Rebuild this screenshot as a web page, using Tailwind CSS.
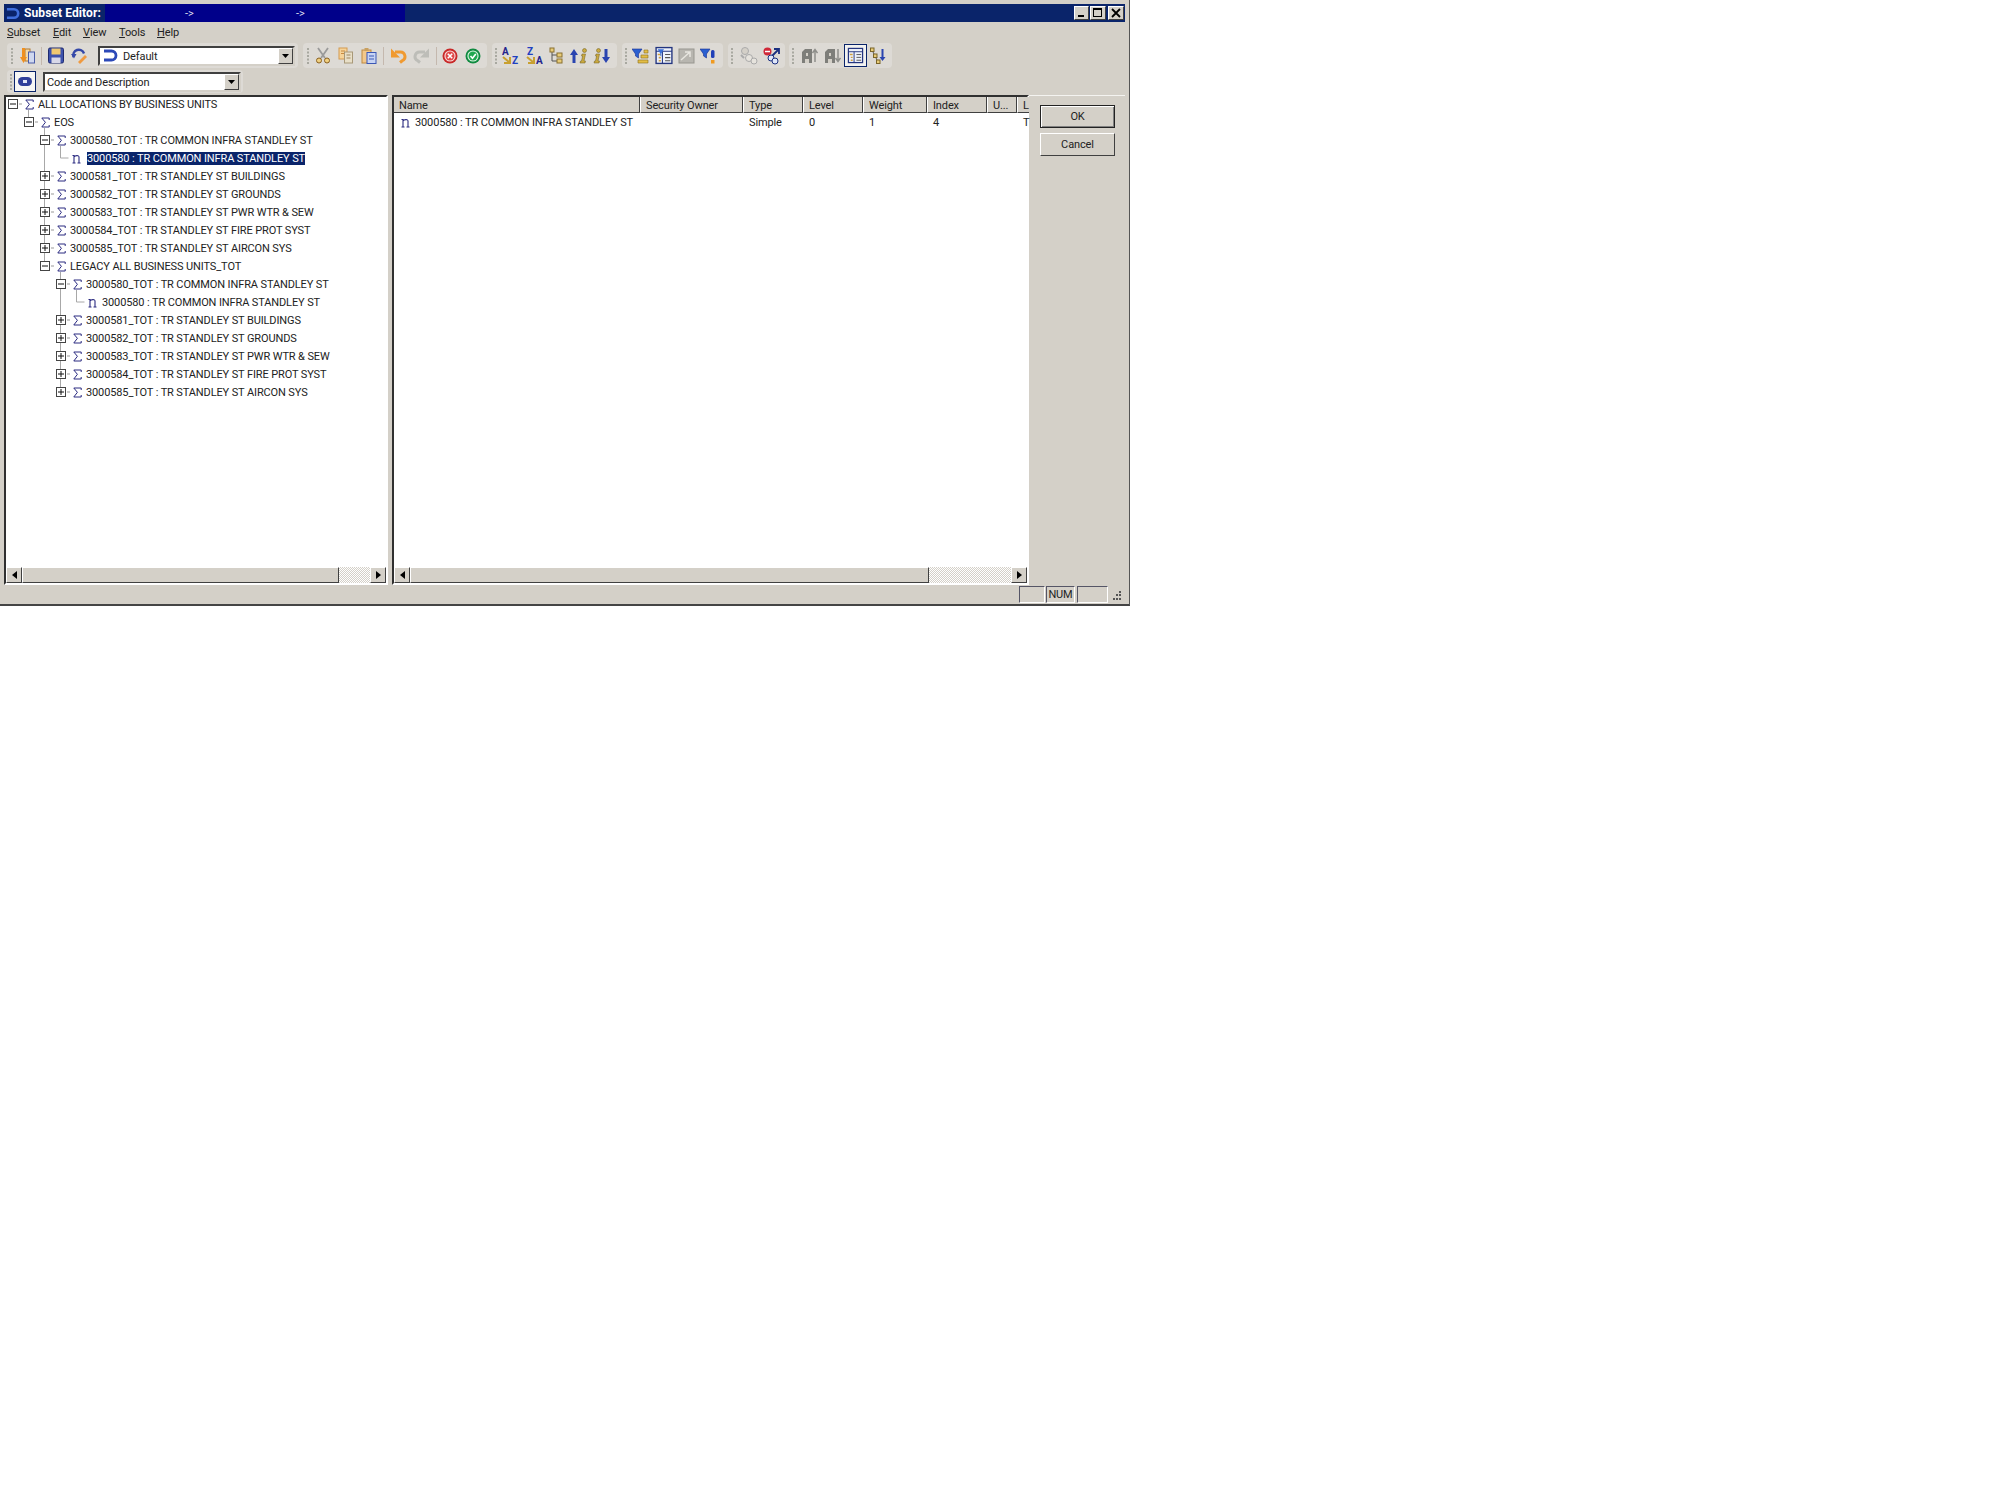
<!DOCTYPE html>
<html>
<head>
<meta charset="utf-8">
<script src="https://cdn.jsdelivr.net/npm/@tailwindcss/browser@4"></script>
</head>
<body class="bg-white font-['Roboto',sans-serif] text-[11px] tracking-[-0.12px] leading-none text-black">
<svg class="hidden">
  <defs>
    <symbol id="plus" viewBox="0 0 17 10"><rect x=".5" y=".5" width="9" height="9" fill="#fff" stroke="#444"/><path d="M2 5h6M5 2v6" stroke="#111"/><path d="M11 5h3" stroke="#999"/></symbol>
    <symbol id="minus" viewBox="0 0 17 10"><rect x=".5" y=".5" width="9" height="9" fill="#fff" stroke="#444"/><path d="M2 5h6" stroke="#111"/><path d="M11 5h3" stroke="#999"/></symbol>
    <symbol id="sigma" viewBox="0 0 9 11"><path d="M8.200 3V1H.8l3.600 4.300L.8 10h7.400V8" fill="none" stroke="#2a2a80" stroke-width="1"/></symbol>
    <symbol id="leaf" viewBox="0 0 9 11"><path d="M.5 2.500H2v7M.5 10h3M2 4C3 2.500 7 1.800 7 4v6M5.500 10h3" fill="none" stroke="#2a2a80" stroke-width="1.100"/></symbol>
    <symbol id="logo" viewBox="0 0 16 13"><path d="M1 2h7.500a4.500 4.500 0 0 1 0 9H1" fill="none" stroke="currentColor" stroke-width="2.800"/></symbol>
    <symbol id="down" viewBox="0 0 9 9"><path d="M1 3h7L4.500 7z" fill="#000"/></symbol>
    <symbol id="grip" viewBox="0 0 2 16"><path d="M1 0v16" stroke="#a8a8a0" stroke-width="2" stroke-dasharray="2 1.500"/></symbol>
    <symbol id="table" viewBox="0 0 18 18"><rect x="1.500" y="1.500" width="15" height="15" fill="#eef2fb" stroke="#24357f" stroke-width="1.300"/><path d="M1.500 5h15M7.500 5v11.500" stroke="#24357f"/><path d="M10 8h5M10 11h5M10 14h5" stroke="#555"/><path d="M3 8l3 0M4 11h2M4 14h2" stroke="#d0a040" stroke-width="1.500"/></symbol>
    <symbol id="ital" viewBox="0 0 8 16"><circle cx="5.500" cy="2.500" r="2" fill="#cbaa40" stroke="#6a5a20" stroke-width=".5"/><path d="M3 6h3.500L5 13h1.500l-.5 2H1l.5-2h1L3.600 8H2.500z" fill="#cbaa40" stroke="#6a5a20" stroke-width=".5"/></symbol>
  </defs>
</svg>

<div class="w-[1130px] h-[606px] bg-[#d4d0c8] border-r border-b-2 border-r-[#555] border-b-[#444] flex flex-col overflow-hidden">
  <!-- title bar -->
  <div class="shrink-0 mx-[4px] mt-[4px] h-[18px] bg-[#0a246a] flex items-center text-white relative">
    <svg class="w-[15px] h-[13px] ml-[2px] text-[#3f6fdc]"><use href="#logo"/></svg>
    <span class="ml-[3px] font-bold text-[12px] tracking-[0.1px]">Subset Editor:</span>
    <div class="absolute left-[101px] top-0 h-[18px] w-[300px] bg-[#00008a] text-[11px] text-[#dde]">
      <span class="absolute left-[80px] top-[4px]">-&gt;</span>
      <span class="absolute left-[191px] top-[4px]">-&gt;</span>
    </div>
    <div class="ml-auto flex items-center mr-[1px]">
      <div class="w-[15px] h-[14px] bg-[#d4d0c8] border border-t-white border-l-white border-r-[#404040] border-b-[#404040] relative"><div class="absolute left-[3px] bottom-[2px] w-[6px] h-[2px] bg-black"></div></div>
      <div class="ml-[1px] w-[16px] h-[14px] bg-[#d4d0c8] border border-t-white border-l-white border-r-[#404040] border-b-[#404040] relative"><div class="absolute left-[2px] top-[1px] w-[9px] h-[9px] border border-t-2 border-black"></div></div>
      <div class="ml-[2px] w-[16px] h-[14px] bg-[#d4d0c8] border border-t-white border-l-white border-r-[#404040] border-b-[#404040]"><svg class="w-[14px] h-[12px]" viewBox="0 0 14 12"><path d="M3 2l8 8M11 2l-8 8" stroke="#000" stroke-width="1.800"/></svg></div>
    </div>
  </div>

  <!-- menu -->
  <div class="shrink-0 h-[21px] flex items-center text-[11px] text-[#222]">
    <span class="ml-[7px] w-[46px]"><u>S</u>ubset</span>
    <span class="w-[30px]"><u>E</u>dit</span>
    <span class="w-[36px]"><u>V</u>iew</span>
    <span class="w-[38px]"><u>T</u>ools</span>
    <span><u>H</u>elp</span>
  </div>

  <!-- toolbar 1 -->
  <div class="shrink-0 h-[25px] flex items-center pl-[7px]">
    <div class="w-[291px] h-[25px] bg-[#dddad5] rounded-[4px] flex items-center">
      <svg class="ml-[4px] w-[2px] h-[16px]"><use href="#grip"/></svg>
      <svg class="ml-[6px] w-[16px] h-[18px]" viewBox="0 0 16 18"><rect x="6" y="2" width="5" height="12" fill="#f3d9a8" stroke="#b07830"/><rect x="9.500" y="5" width="6" height="11" fill="#cfd8f0" stroke="#4a5ca8"/><path d="M3 1h3v9h2l-3.500 6L1 10h2z" fill="#f09020"/></svg>
      <div class="ml-[6px] w-px h-[18px] bg-[#c4b8ae]"></div>
      <svg class="ml-[6px] w-[16px] h-[17px]" viewBox="0 0 16 17"><rect x=".5" y="1" width="15" height="15" rx="1.500" fill="#3d52ac" stroke="#1f2a70"/><rect x="3.500" y="1.500" width="9" height="6" fill="#f0c870"/><rect x="3.500" y="10.500" width="9" height="5.500" fill="#d8d8e8"/></svg>
      <svg class="ml-[7px] w-[16px] h-[17px]" viewBox="0 0 16 17"><path d="M2.500 10A5.500 5.500 0 1 1 13 6.500" fill="none" stroke="#3448a8" stroke-width="2.400"/><path d="M0 7l5.500 0-2.500 4.500z" fill="#3448a8"/><path d="M7 15l7-7 2 2-7 7z" fill="#f09a40"/></svg>
      <div class="ml-[11px] w-[197px] h-[20px] bg-white border-2 border-t-[#404040] border-l-[#404040] border-r-[#d4d0c8] border-b-[#d4d0c8] flex items-center">
        <svg class="ml-[3px] w-[16px] h-[13px] text-[#2c49b8]"><use href="#logo"/></svg>
        <span class="ml-[4px] pt-[1px] text-[#222]">Default</span>
        <div class="ml-auto w-[15px] h-[16px] bg-[#d4d0c8] border border-t-white border-l-white border-r-[#404040] border-b-[#404040] flex items-center justify-center"><svg class="w-[9px] h-[9px]"><use href="#down"/></svg></div>
      </div>
    </div>
    <div class="ml-[5px] w-[184px] h-[25px] bg-[#dddad5] rounded-[4px] flex items-center">
      <svg class="ml-[4px] w-[2px] h-[16px]"><use href="#grip"/></svg>
      <svg class="ml-[6px] w-[16px] h-[17px]" viewBox="0 0 16 17"><path d="M3 1l7 10M13 1L6 11" stroke="#9a9a9a" stroke-width="1.800"/><circle cx="4" cy="13.500" r="2.500" fill="#f0d080" stroke="#8a6020"/><circle cx="12" cy="13.500" r="2.500" fill="#f0d080" stroke="#8a6020"/></svg>
      <svg class="ml-[7px] w-[16px] h-[17px]" viewBox="0 0 16 17"><rect x="1" y="1" width="8" height="11" fill="#f6d49a" stroke="#d49a50"/><path d="M3 4h4M3 6.500h4" stroke="#c88a40"/><rect x="6.500" y="5" width="8" height="11" fill="#e8dfc8" stroke="#a89878"/><path d="M8.500 8h4M8.500 11h4" stroke="#a08860"/></svg>
      <svg class="ml-[7px] w-[16px] h-[17px]" viewBox="0 0 16 17"><rect x="1" y="3" width="9" height="13" fill="#f3c88a" stroke="#c08a40"/><rect x="3.500" y="1" width="4" height="3" fill="#c9a060"/><rect x="6" y="5.500" width="9" height="11" fill="#c7d4f4" stroke="#3b57b5"/><path d="M8 9h5M8 12h5" stroke="#3b57b5"/></svg>
      <div class="ml-[6px] w-px h-[18px] bg-[#c4b8ae]"></div>
      <svg class="ml-[6px] w-[17px] h-[17px]" viewBox="0 0 17 17"><path d="M5 5h5.500a4.500 4.500 0 0 1 2 8.500L10 15.500" fill="none" stroke="#f09a30" stroke-width="3"/><path d="M1 1.500v9h9z" fill="#f09a30"/></svg>
      <svg class="ml-[6px] w-[17px] h-[17px]" viewBox="0 0 17 17"><path d="M12 5H6.500a4.500 4.500 0 0 0-2 8.500L7 15.500" fill="none" stroke="#bdbdb8" stroke-width="3"/><path d="M16 1.500v9H7z" fill="#bdbdb8"/></svg>
      <div class="ml-[6px] w-px h-[18px] bg-[#c4b8ae]"></div>
      <svg class="ml-[5px] w-[16px] h-[16px]" viewBox="0 0 16 16"><circle cx="8" cy="8" r="7.500" fill="#c82828"/><circle cx="8" cy="8" r="5.600" fill="#f8e0e0"/><circle cx="8" cy="8" r="4.500" fill="#e04848"/><path d="M5.800 5.800l4.400 4.400M10.200 5.800l-4.400 4.400" stroke="#fff" stroke-width="1.600"/></svg>
      <svg class="ml-[7px] w-[16px] h-[16px]" viewBox="0 0 16 16"><circle cx="8" cy="8" r="7.500" fill="#0f8a40"/><circle cx="8" cy="8" r="5.600" fill="#e0f6e6"/><circle cx="8" cy="8" r="4.500" fill="#20a850"/><path d="M5.500 8l2 2.200L10.800 6" fill="none" stroke="#fff" stroke-width="1.600"/></svg>
    </div>
    <div class="ml-[5px] w-[125px] h-[25px] bg-[#dddad5] rounded-[4px] flex items-center">
      <svg class="ml-[3px] w-[2px] h-[16px]"><use href="#grip"/></svg>
      <svg class="ml-[5px] w-[17px] h-[18px]" viewBox="0 0 17 18"><text x="0" y="8" font-size="10" font-weight="700" fill="#24248c">A</text><text x="10" y="17" font-size="10" font-weight="700" fill="#2040c0">Z</text><path d="M1 10l6 5M8 10v6H2" fill="none" stroke="#c8a030" stroke-width="2"/></svg>
      <svg class="ml-[7px] w-[17px] h-[18px]" viewBox="0 0 17 18"><text x="1" y="8" font-size="10" font-weight="700" fill="#2040c0">Z</text><text x="10" y="17" font-size="10" font-weight="700" fill="#24248c">A</text><path d="M1 10l6 5M8 10v6H2" fill="none" stroke="#c8a030" stroke-width="2"/></svg>
      <svg class="ml-[6px] w-[14px] h-[18px]" viewBox="0 0 14 18"><path d="M3 3v11h5M3 8h5" fill="none" stroke="#555"/><rect x="1" y="1" width="4" height="4" fill="#e8cc78" stroke="#8a7030"/><rect x="8" y="6" width="5" height="4" fill="#e8cc78" stroke="#8a7030"/><rect x="8" y="12" width="5" height="4" fill="#e8cc78" stroke="#8a7030"/></svg>
      <svg class="ml-[7px] w-[18px] h-[18px]" viewBox="0 0 18 18"><path d="M4 2L0 8h2.500v8h3V8H8z" fill="#2a44b0"/><use href="#ital" x="9" y="1" width="8" height="16"/></svg>
      <svg class="ml-[5px] w-[18px] h-[18px]" viewBox="0 0 18 18"><use href="#ital" x="0" y="1" width="8" height="16"/><path d="M13 16l4-6h-2.500V2h-3v8H9z" fill="#2a44b0"/></svg>
    </div>
    <div class="ml-[5px] w-[101px] h-[25px] bg-[#dddad5] rounded-[4px] flex items-center">
      <svg class="ml-[3px] w-[2px] h-[16px]"><use href="#grip"/></svg>
      <svg class="ml-[5px] w-[18px] h-[18px]" viewBox="0 0 18 18"><path d="M0 2h10L6.500 7v4l-3-2V7z" fill="#2a5fd0" stroke="#1a2f90" stroke-width=".6"/><path d="M12 3h4v3h-4zM9 8h7v3H9zM6 13h10v3H6z" fill="#e3bd45" stroke="#8a7020" stroke-width=".6"/></svg>
      <svg class="ml-[4px] w-[20px] h-[19px]" viewBox="0 0 18 18"><use href="#table"/><path d="M3 3h6L6.500 7v3L5.500 9V7z" fill="#3a70d8"/></svg>
      <svg class="ml-[4px] w-[17px] h-[17px]" viewBox="0 0 17 17"><rect x="1" y="2" width="15" height="14" fill="#b8b6b0" stroke="#989690"/><path d="M3 13l9-8M7 5h5v5" fill="none" stroke="#e8e6e0" stroke-width="1.500"/></svg>
      <svg class="ml-[5px] w-[17px] h-[18px]" viewBox="0 0 17 18"><path d="M0 2h10L6.500 7v4l-3-2V7z" fill="#2a5fd0" stroke="#1a2f90" stroke-width=".6"/><rect x="11" y="3" width="3.500" height="8" rx="1.500" fill="#2040b8"/><rect x="11" y="13" width="3.500" height="3.500" fill="#f09a20"/></svg>
    </div>
    <div class="ml-[5px] w-[57px] h-[25px] bg-[#dddad5] rounded-[4px] flex items-center">
      <svg class="ml-[3px] w-[2px] h-[16px]"><use href="#grip"/></svg>
      <svg class="ml-[7px] w-[18px] h-[18px]" viewBox="0 0 18 18"><circle cx="5" cy="4" r="3.500" fill="#d4d0c8" stroke="#aaa"/><circle cx="9" cy="11" r="3.500" fill="#e6e3dd" stroke="#aaa"/><circle cx="14" cy="14" r="3" fill="#e6e3dd" stroke="#aaa"/><path d="M1 8l3 3" stroke="#aaa" stroke-width="2"/></svg>
      <svg class="ml-[5px] w-[19px] h-[18px]" viewBox="0 0 19 18"><circle cx="4.500" cy="4.500" r="4" fill="#d02838"/><path d="M2 4.500h5" stroke="#fff" stroke-width="1.500"/><path d="M9 9l6-6M11 2h5v5" fill="none" stroke="#1a2f80" stroke-width="1.800"/><circle cx="8" cy="11" r="3" fill="#dfe6f8" stroke="#1a2f80"/><circle cx="12" cy="14" r="3" fill="#dfe6f8" stroke="#1a2f80"/></svg>
    </div>
    <div class="ml-[4px] w-[103px] h-[25px] bg-[#dddad5] rounded-[4px] flex items-center">
      <svg class="ml-[3px] w-[2px] h-[16px]"><use href="#grip"/></svg>
      <svg class="ml-[7px] w-[17px] h-[17px]" viewBox="0 0 17 17"><path d="M1 16V5l3-3h7v14z" fill="#7e7e7a"/><path d="M4 16v-4h4v4zM5 6h2v3H5z" fill="#d4d0c8"/><path d="M14 15V3M11.500 6L14 2.500 16.500 6" fill="none" stroke="#8e8e8a" stroke-width="1.500"/></svg>
      <svg class="ml-[6px] w-[17px] h-[17px]" viewBox="0 0 17 17"><path d="M1 16V5l3-3h7v14z" fill="#7e7e7a"/><path d="M4 16v-4h4v4zM5 6h2v3H5z" fill="#d4d0c8"/><path d="M14 2v12M11.500 11L14 14.500 16.500 11" fill="none" stroke="#8e8e8a" stroke-width="1.500"/></svg>
      <div class="ml-[3px] w-[23px] h-[23px] bg-[#f2f2f0] border border-[#0a246a] flex items-center justify-center"><svg class="w-[17px] h-[17px]" viewBox="0 0 18 18"><use href="#table"/></svg></div>
      <svg class="ml-[3px] w-[16px] h-[18px]" viewBox="0 0 16 18"><path d="M2 3l3 6 3 6" stroke="#555" fill="none"/><rect x=".5" y="1" width="3.500" height="3.500" fill="#e8cc78" stroke="#7a6428"/><rect x="3.500" y="7" width="3.500" height="3.500" fill="#e8cc78" stroke="#7a6428"/><rect x="6.500" y="13" width="3.500" height="3.500" fill="#e8cc78" stroke="#7a6428"/><path d="M12.500 14l3-4h-2V2h-2v8h-2z" fill="#2a44b0"/></svg>
    </div>
  </div>

  <!-- toolbar 2 -->
  <div class="shrink-0 mt-[2px] h-[23px] pl-[7px] flex">
    <div class="w-[236px] h-[23px] bg-[#dddad5] rounded-[4px] flex items-center">
      <svg class="ml-[3px] w-[2px] h-[16px]"><use href="#grip"/></svg>
      <div class="ml-[2px] w-[22px] h-[21px] bg-[#f6f6f4] border border-[#0a246a] flex items-center justify-center">
        <svg class="w-[14px] h-[9px]" viewBox="0 0 14 9"><rect width="14" height="9" rx="4.500" fill="#2f3f9a"/><rect x="5" y="3" width="4" height="3" fill="#dfe4f6"/></svg>
      </div>
      <div class="ml-[7px] w-[198px] h-[20px] bg-white border-2 border-t-[#404040] border-l-[#404040] border-r-[#d4d0c8] border-b-[#d4d0c8] flex items-center">
        <span class="ml-[2px] pt-[1px] text-[#222]">Code and Description</span>
        <div class="ml-auto w-[15px] h-[16px] bg-[#d4d0c8] border border-t-white border-l-white border-r-[#404040] border-b-[#404040] flex items-center justify-center"><svg class="w-[9px] h-[9px]"><use href="#down"/></svg></div>
      </div>
    </div>
  </div>

  <!-- main -->
  <div class="shrink-0 mt-[2px] h-[490px] flex pl-[4px]">
    <!-- tree -->
    <div class="w-[384px] h-[490px] bg-white border-2 border-t-[#303030] border-l-[#303030] border-r-white border-b-white flex flex-col">
      <div class="flex-1 relative -mt-[2px] text-[#222]">
        <svg class="absolute left-0 top-0 w-[380px] h-[320px]" viewBox="6 95 380 320"><path d="M28.500 110v7M44.500 128v133M60.500 146v12h8M60.500 272v115M76.500 290v12h8" fill="none" stroke="#a8a8a8"/></svg>
        <div class="relative ml-[1px] flex flex-col">
          <div class="h-[18px] flex items-center pl-[1px]"><svg class="w-[17px] h-[10px]"><use href="#minus"/></svg><svg class="w-[9px] h-[11px]"><use href="#sigma"/></svg><span class="ml-[4px]">ALL LOCATIONS BY BUSINESS UNITS</span></div>
          <div class="h-[18px] flex items-center pl-[17px]"><svg class="w-[17px] h-[10px]"><use href="#minus"/></svg><svg class="w-[9px] h-[11px]"><use href="#sigma"/></svg><span class="ml-[4px]">EOS</span></div>
          <div class="h-[18px] flex items-center pl-[33px]"><svg class="w-[17px] h-[10px]"><use href="#minus"/></svg><svg class="w-[9px] h-[11px]"><use href="#sigma"/></svg><span class="ml-[4px]">3000580_TOT : TR COMMON INFRA STANDLEY ST</span></div>
          <div class="h-[18px] flex items-center pl-[65px]"><svg class="w-[9px] h-[11px]"><use href="#leaf"/></svg><span class="ml-[6px] h-[13px] flex items-center bg-[#0a246a] text-white">3000580 : TR COMMON INFRA STANDLEY ST</span></div>
          <div class="h-[18px] flex items-center pl-[33px]"><svg class="w-[17px] h-[10px]"><use href="#plus"/></svg><svg class="w-[9px] h-[11px]"><use href="#sigma"/></svg><span class="ml-[4px]">3000581_TOT : TR STANDLEY ST BUILDINGS</span></div>
          <div class="h-[18px] flex items-center pl-[33px]"><svg class="w-[17px] h-[10px]"><use href="#plus"/></svg><svg class="w-[9px] h-[11px]"><use href="#sigma"/></svg><span class="ml-[4px]">3000582_TOT : TR STANDLEY ST GROUNDS</span></div>
          <div class="h-[18px] flex items-center pl-[33px]"><svg class="w-[17px] h-[10px]"><use href="#plus"/></svg><svg class="w-[9px] h-[11px]"><use href="#sigma"/></svg><span class="ml-[4px]">3000583_TOT : TR STANDLEY ST PWR WTR &amp; SEW</span></div>
          <div class="h-[18px] flex items-center pl-[33px]"><svg class="w-[17px] h-[10px]"><use href="#plus"/></svg><svg class="w-[9px] h-[11px]"><use href="#sigma"/></svg><span class="ml-[4px]">3000584_TOT : TR STANDLEY ST FIRE PROT SYST</span></div>
          <div class="h-[18px] flex items-center pl-[33px]"><svg class="w-[17px] h-[10px]"><use href="#plus"/></svg><svg class="w-[9px] h-[11px]"><use href="#sigma"/></svg><span class="ml-[4px]">3000585_TOT : TR STANDLEY ST AIRCON SYS</span></div>
          <div class="h-[18px] flex items-center pl-[33px]"><svg class="w-[17px] h-[10px]"><use href="#minus"/></svg><svg class="w-[9px] h-[11px]"><use href="#sigma"/></svg><span class="ml-[4px]">LEGACY ALL BUSINESS UNITS_TOT</span></div>
          <div class="h-[18px] flex items-center pl-[49px]"><svg class="w-[17px] h-[10px]"><use href="#minus"/></svg><svg class="w-[9px] h-[11px]"><use href="#sigma"/></svg><span class="ml-[4px]">3000580_TOT : TR COMMON INFRA STANDLEY ST</span></div>
          <div class="h-[18px] flex items-center pl-[81px]"><svg class="w-[9px] h-[11px]"><use href="#leaf"/></svg><span class="ml-[5px]">3000580 : TR COMMON INFRA STANDLEY ST</span></div>
          <div class="h-[18px] flex items-center pl-[49px]"><svg class="w-[17px] h-[10px]"><use href="#plus"/></svg><svg class="w-[9px] h-[11px]"><use href="#sigma"/></svg><span class="ml-[4px]">3000581_TOT : TR STANDLEY ST BUILDINGS</span></div>
          <div class="h-[18px] flex items-center pl-[49px]"><svg class="w-[17px] h-[10px]"><use href="#plus"/></svg><svg class="w-[9px] h-[11px]"><use href="#sigma"/></svg><span class="ml-[4px]">3000582_TOT : TR STANDLEY ST GROUNDS</span></div>
          <div class="h-[18px] flex items-center pl-[49px]"><svg class="w-[17px] h-[10px]"><use href="#plus"/></svg><svg class="w-[9px] h-[11px]"><use href="#sigma"/></svg><span class="ml-[4px]">3000583_TOT : TR STANDLEY ST PWR WTR &amp; SEW</span></div>
          <div class="h-[18px] flex items-center pl-[49px]"><svg class="w-[17px] h-[10px]"><use href="#plus"/></svg><svg class="w-[9px] h-[11px]"><use href="#sigma"/></svg><span class="ml-[4px]">3000584_TOT : TR STANDLEY ST FIRE PROT SYST</span></div>
          <div class="h-[18px] flex items-center pl-[49px]"><svg class="w-[17px] h-[10px]"><use href="#plus"/></svg><svg class="w-[9px] h-[11px]"><use href="#sigma"/></svg><span class="ml-[4px]">3000585_TOT : TR STANDLEY ST AIRCON SYS</span></div>
        </div>
      </div>
      <div class="shrink-0 h-[17px] flex border-t border-t-white">
        <div class="w-[16px] bg-[#d4d0c8] border border-t-white border-l-white border-r-[#404040] border-b-[#404040] flex items-center justify-center"><svg class="w-[5px] h-[8px]" viewBox="0 0 5 8"><path d="M5 0v8L0 4z"/></svg></div>
        <div class="w-[317px] bg-[#d4d0c8] border border-t-white border-l-white border-r-[#404040] border-b-[#404040]"></div>
        <div class="flex-1 bg-[repeating-conic-gradient(#d4d0c8_0_25%,#fff_0_50%)] bg-[length:2px_2px]"></div>
        <div class="w-[16px] bg-[#d4d0c8] border border-t-white border-l-white border-r-[#404040] border-b-[#404040] flex items-center justify-center"><svg class="w-[5px] h-[8px]" viewBox="0 0 5 8"><path d="M0 0v8l5-4z"/></svg></div>
      </div>
    </div>

    <!-- list -->
    <div class="ml-[4px] w-[637px] h-[490px] bg-white border-2 border-t-[#303030] border-l-[#303030] border-r-white border-b-white flex flex-col">
      <div class="shrink-0 flex h-[16px] text-[#222]">
        <div class="w-[246px] shrink-0 pl-[5px] pt-[1px] bg-[#d4d0c8] border-r border-b border-r-[#404040] border-b-[#404040] flex items-center">Name</div>
        <div class="w-[103px] shrink-0 pl-[5px] pt-[1px] bg-[#d4d0c8] border-r border-b border-l border-l-white border-r-[#404040] border-b-[#404040] flex items-center">Security Owner</div>
        <div class="w-[60px] shrink-0 pl-[5px] pt-[1px] bg-[#d4d0c8] border-r border-b border-l border-l-white border-r-[#404040] border-b-[#404040] flex items-center">Type</div>
        <div class="w-[60px] shrink-0 pl-[5px] pt-[1px] bg-[#d4d0c8] border-r border-b border-l border-l-white border-r-[#404040] border-b-[#404040] flex items-center">Level</div>
        <div class="w-[64px] shrink-0 pl-[5px] pt-[1px] bg-[#d4d0c8] border-r border-b border-l border-l-white border-r-[#404040] border-b-[#404040] flex items-center">Weight</div>
        <div class="w-[60px] shrink-0 pl-[5px] pt-[1px] bg-[#d4d0c8] border-r border-b border-l border-l-white border-r-[#404040] border-b-[#404040] flex items-center">Index</div>
        <div class="w-[30px] shrink-0 pl-[5px] pt-[1px] bg-[#d4d0c8] border-r border-b border-l border-l-white border-r-[#404040] border-b-[#404040] flex items-center">U...</div>
        <div class="flex-1 pl-[5px] pt-[1px] bg-[#d4d0c8] border-b border-l border-l-white border-b-[#404040] flex items-center">L</div>
      </div>
      <div class="flex-1 min-h-0 text-[#222]">
        <div class="flex items-center h-[18px] whitespace-nowrap">
          <div class="w-[246px] shrink-0 flex items-center pl-[7px]"><svg class="shrink-0 w-[9px] h-[11px]"><use href="#leaf"/></svg><span class="ml-[5px]">3000580 : TR COMMON INFRA STANDLEY ST</span></div>
          <div class="w-[103px] shrink-0"></div>
          <div class="w-[60px] shrink-0 pl-[6px]">Simple</div>
          <div class="w-[60px] shrink-0 pl-[6px]">0</div>
          <div class="w-[64px] shrink-0 pl-[6px]">1</div>
          <div class="w-[60px] shrink-0 pl-[6px]">4</div>
          <div class="w-[30px] shrink-0"></div>
          <div class="pl-[6px]">T</div>
        </div>
      </div>
      <div class="shrink-0 h-[17px] flex border-t border-t-white">
        <div class="w-[16px] bg-[#d4d0c8] border border-t-white border-l-white border-r-[#404040] border-b-[#404040] flex items-center justify-center"><svg class="w-[5px] h-[8px]" viewBox="0 0 5 8"><path d="M5 0v8L0 4z"/></svg></div>
        <div class="w-[519px] bg-[#d4d0c8] border border-t-white border-l-white border-r-[#404040] border-b-[#404040]"></div>
        <div class="flex-1 bg-[repeating-conic-gradient(#d4d0c8_0_25%,#fff_0_50%)] bg-[length:2px_2px]"></div>
        <div class="w-[16px] bg-[#d4d0c8] border border-t-white border-l-white border-r-[#404040] border-b-[#404040] flex items-center justify-center"><svg class="w-[5px] h-[8px]" viewBox="0 0 5 8"><path d="M0 0v8l5-4z"/></svg></div>
      </div>
    </div>

    <!-- buttons -->
    <div class="w-[96px] mr-[3px] border-t border-t-[#f4f3f0] pt-[9px] pl-[11px] text-[#222] flex flex-col">
      <div class="w-[75px] h-[23px] bg-[#d4d0c8] border border-[#222] shadow-[inset_1px_1px_0_#fff,inset_-1px_-1px_0_#808080] flex items-center justify-center">OK</div>
      <div class="mt-[5px] w-[75px] h-[23px] bg-[#d4d0c8] border border-t-white border-l-white border-r-[#404040] border-b-[#404040] flex items-center justify-center">Cancel</div>
    </div>
  </div>

  <!-- status -->
  <div class="flex-1 flex items-center pl-[1019px] text-[#222]">
    <div class="w-[26px] h-[17px] border border-t-[#556] border-l-[#556] border-r-white border-b-white"></div>
    <div class="ml-[1px] w-[29px] h-[17px] border border-t-[#556] border-l-[#556] border-r-white border-b-white flex items-center justify-center">NUM</div>
    <div class="ml-[2px] w-[31px] h-[17px] border border-t-[#556] border-l-[#556] border-r-white border-b-white"></div>
    <svg class="ml-[2px] w-[12px] h-[12px] mt-[3px]" viewBox="0 0 12 12"><path d="M9 1h2v2H9zM6 4h2v2H6zM9 4h2v2H9zM3 8h2v2H3zM6 8h2v2H6zM9 8h2v2H9z" fill="#555"/></svg>
  </div>
</div>
</body>
</html>
